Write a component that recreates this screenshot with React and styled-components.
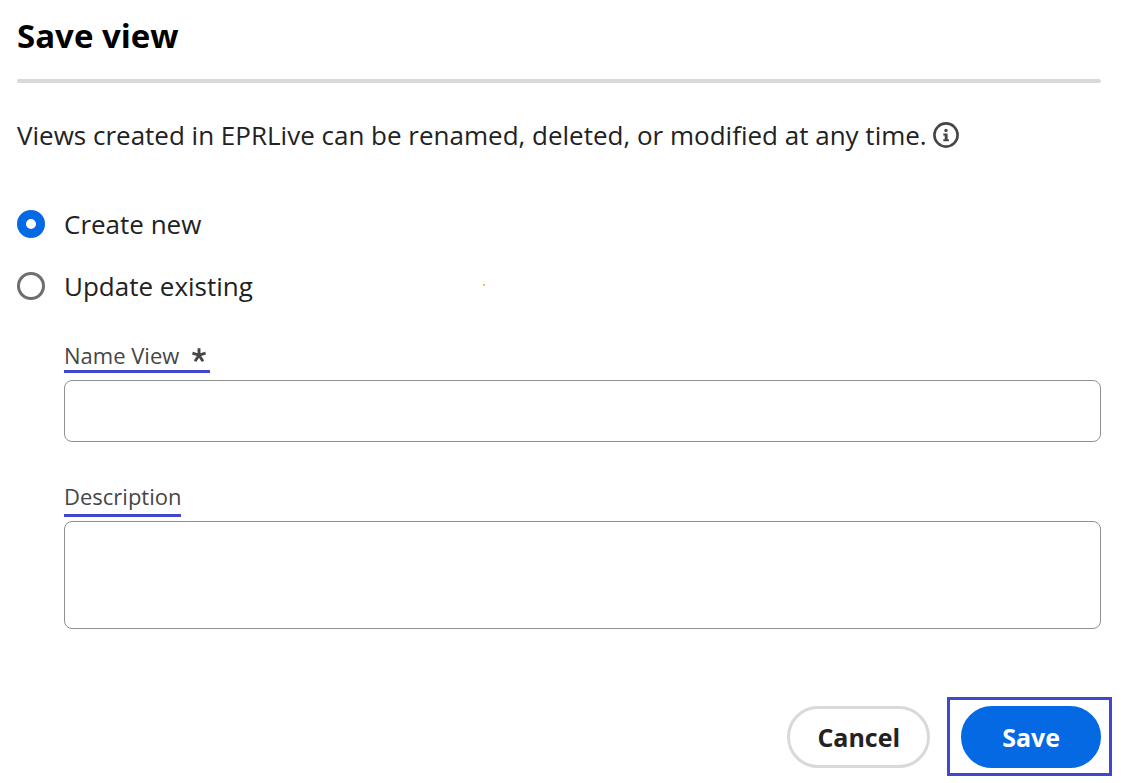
import React, { useState } from "react";
import styled, { createGlobalStyle } from "styled-components";

const GlobalStyle = createGlobalStyle`
    * {
        box-sizing: border-box;
    }

    body {
        margin: 0;
        background: #fff;
        color: #222;
        font-family: "Segoe UI", "Open Sans", sans-serif;
        font-size: 26px;
        line-height: 36px;
    }
`;

const Dialog = styled.form`
    padding: 16px 11px 7px 17px;
`;

const Content = styled.div`
    padding-right: 11px;
`;

const Title = styled.h1`
    margin: 0;
    color: #000;
    font-size: 33px;
    font-weight: 700;
    line-height: 40px;
`;

const Divider = styled.hr`
    height: 4px;
    margin: 23px 0 34px;
    border: 0;
    border-radius: 2px;
    background: #d9d9d9;
`;

const Intro = styled.p`
    display: flex;
    align-items: center;
    gap: 6px;
    margin: 0 0 53px;
`;

const InfoIcon = styled.svg`
    flex: none;
    width: 26px;
    height: 26px;
`;

const Options = styled.div`
    position: relative;
    display: flex;
    flex-direction: column;
    gap: 26px;
`;

const Option = styled.label`
    display: flex;
    align-items: center;
    gap: 19px;
`;

const Radio = styled.input`
    appearance: none;
    flex: none;
    width: 28px;
    height: 28px;
    margin: 0;
    border: 3px solid #6e6e6e;
    border-radius: 50%;
    background: #fff;

    &:checked {
        border: 9px solid #0469e3;
    }
`;

const Speck = styled.span`
    position: absolute;
    bottom: 18px;
    left: 43%;
    width: 2px;
    height: 2px;
    background: #ffb84d;
`;

const Fields = styled.div`
    display: flex;
    flex-direction: column;
    gap: 39px;
    padding: 36px 0 68px 47px;
`;

const Field = styled.div`
    display: flex;
    flex-direction: column;
    align-items: flex-start;
    gap: ${(props) => props.$gap};
`;

const FieldLabel = styled.label`
    display: flex;
    gap: 13px;
    padding: 0 ${(props) => (props.$required ? "4px" : 0)} ${(props) => (props.$required ? 0 : "3px")} 0;
    border-bottom: 3px solid #4048cc;
    color: #464646;
    font-size: 22px;
    line-height: 30px;
`;

const Asterisk = styled.svg`
    width: 14px;
    height: 14px;
    margin-top: 8px;
`;

const inputBox = `
    display: block;
    width: 100%;
    margin: 0;
    padding: 12px 16px;
    border: 1px solid #909090;
    border-radius: 8px;
    background: #fff;
    color: #222;
    font: inherit;
`;

const TextInput = styled.input`
    ${inputBox}
    height: 62px;
`;

const TextArea = styled.textarea`
    ${inputBox}
    height: 108px;
    resize: none;
`;

const Footer = styled.div`
    display: flex;
    align-items: center;
    justify-content: flex-end;
    gap: 17px;
`;

const Button = styled.button`
    height: 62px;
    padding: 0 ${(props) => (props.$primary ? "38px" : "27px")};
    border: 3px solid ${(props) => (props.$primary ? "#0469e3" : "#d9d9d9")};
    border-radius: 31px;
    background: ${(props) => (props.$primary ? "#0469e3" : "#fff")};
    color: ${(props) => (props.$primary ? "#fff" : "#222")};
    font-family: inherit;
    font-size: 25px;
    font-weight: 700;
`;

const Highlight = styled.div`
    padding: 6px 8px 5px 11px;
    border: 3px solid #4048cc;
`;

const App = () => {
    const [mode, setMode] = useState("create");

    return (
        <>
            <GlobalStyle />
            <Dialog onSubmit={(e) => e.preventDefault()}>
                <Content>
                    <Title>Save view</Title>
                    <Divider />
                    <Intro>
                        Views created in EPRLive can be renamed, deleted, or modified at any time.
                        <InfoIcon viewBox="0 0 26 26" aria-hidden="true">
                            <circle cx="13" cy="13" r="11.6" fill="none" stroke="#464646" strokeWidth="2.6" />
                            <circle cx="13" cy="8.4" r="1.7" fill="#464646" />
                            <path d="M10.3 11.4H14.6V17.2H15.9V19.2H10.3V17.2H11.7V13.4H10.3Z" fill="#464646" />
                        </InfoIcon>
                    </Intro>
                    <Options>
                        <Option>
                            <Radio type="radio" name="mode" checked={mode === "create"} onChange={() => setMode("create")} />
                            Create new
                        </Option>
                        <Option>
                            <Radio type="radio" name="mode" checked={mode === "update"} onChange={() => setMode("update")} />
                            Update existing
                        </Option>
                        <Speck />
                    </Options>
                    <Fields>
                        <Field $gap="7px">
                            <FieldLabel htmlFor="view-name" $required>
                                Name View
                                <Asterisk viewBox="0 0 14 14" aria-hidden="true">
                                    <path
                                        d="M7 7.2V0.2M7 7.2L0.4 5.2M7 7.2L13.6 5.2M7 7.2L3 13.2M7 7.2L11 13.2"
                                        fill="none"
                                        stroke="#464646"
                                        strokeWidth="2.9"
                                    />
                                </Asterisk>
                            </FieldLabel>
                            <TextInput id="view-name" type="text" required />
                        </Field>
                        <Field $gap="4px">
                            <FieldLabel htmlFor="view-description">Description</FieldLabel>
                            <TextArea id="view-description" />
                        </Field>
                    </Fields>
                </Content>
                <Footer>
                    <Button type="button">Cancel</Button>
                    <Highlight>
                        <Button type="submit" $primary>
                            Save
                        </Button>
                    </Highlight>
                </Footer>
            </Dialog>
        </>
    );
};

export default App;
